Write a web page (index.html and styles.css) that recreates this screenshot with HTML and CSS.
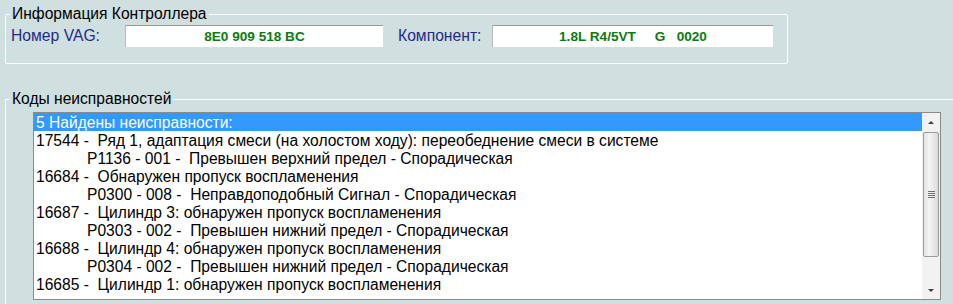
FILE: index.html
```html
<!DOCTYPE html>
<html lang="ru">
  <head>
    <meta charset="utf-8" />
    <title>Информация Контроллера</title>
    <link rel="stylesheet" href="styles.css">
  </head>
  <body>
    <fieldset class="group group-info">
      <legend>Информация Контроллера</legend>
      <div class="info-row">
        <span class="label label-vag">Номер VAG:</span>
        <div class="field field-vag">8E0 909 518 BC</div>
        <span class="label label-comp">Компонент:</span>
        <div class="field field-comp">1.8L R4/5VT&nbsp;&nbsp;&nbsp;&nbsp;&nbsp;G&nbsp;&nbsp;&nbsp;0020</div>
      </div>
    </fieldset>

    <fieldset class="group group-codes">
      <legend>Коды неисправностей</legend>
      <div class="listbox">
        <ul class="list">
          <li class="selected">5 Найдены неисправности:</li>
          <li>17544 -&nbsp; Ряд 1, адаптация смеси (на холостом ходу): переобеднение смеси в системе</li>
          <li class="sub">P1136 - 001 -&nbsp; Превышен верхний предел - Спорадическая</li>
          <li>16684 -&nbsp; Обнаружен пропуск воспламенения</li>
          <li class="sub">P0300 - 008 -&nbsp; Неправдоподобный Сигнал - Спорадическая</li>
          <li>16687 -&nbsp; Цилиндр 3: обнаружен пропуск воспламенения</li>
          <li class="sub">P0303 - 002 -&nbsp; Превышен нижний предел - Спорадическая</li>
          <li>16688 -&nbsp; Цилиндр 4: обнаружен пропуск воспламенения</li>
          <li class="sub">P0304 - 002 -&nbsp; Превышен нижний предел - Спорадическая</li>
          <li>16685 -&nbsp; Цилиндр 1: обнаружен пропуск воспламенения</li>
        </ul>
        <div class="scrollbar">
          <div class="arrow arrow-up"></div>
          <div class="track">
            <div class="thumb"><span class="grip"></span></div>
          </div>
          <div class="arrow arrow-down"></div>
        </div>
      </div>
    </fieldset>
  </body>
</html>
```

FILE: styles.css
```css
* {
  box-sizing: border-box;
}

html, body {
  height: 100%;
}

body {
  margin: 0;
  padding: 6px 0 0 5px;
  background: #D0DFE0;
  font-family: "Liberation Sans", Arial, sans-serif;
  font-size: 15.6px;
  color: #000000;
  overflow: hidden;
  display: flex;
  flex-direction: column;
}

.group {
  margin: 0;
  border: 1px solid #ffffff;
  border-radius: 2px;
}

.group legend {
  padding: 0 2px;
  margin-left: -1px;
  font-size: 15.6px;
  line-height: 16px;
}

.group-info {
  flex: none;
  width: 783px;
  height: 58px;
  padding: 3px 0 0 5px;
}

.info-row {
  display: flex;
  align-items: center;
}

.label {
  color: #1E2A8C;
  font-size: 15.7px;
}

.label-vag {
  width: 114px;
}

.label-comp {
  margin-left: 15px;
  width: 94px;
}

.field {
  height: 22px;
  background: #ffffff;
  border-top: 1px solid #9a9a9a;
  border-left: 1px solid #b8b8b8;
  color: #0D7A12;
  font-weight: bold;
  font-size: 13.6px;
  line-height: 21px;
  text-align: center;
}

.field-vag {
  width: 258px;
}

.field-comp {
  width: 281px;
}

/* the second frame runs off the right and bottom edges */
.group-codes {
  flex: 1;
  min-height: 0;
  margin-top: 27px;
  padding: 5px 0 0 5px;
  border-right: none;
  border-bottom: none;
  border-radius: 2px 0 0 0;
}

.listbox {
  display: flex;
  margin-left: 22px;
  width: 908px;
  height: 188px;
  border: 1px solid #8a8a8a;
  background: #ffffff;
}

.list {
  flex: 1;
  list-style: none;
  margin: 0;
  padding: 0;
  font-size: 15.6px;
  line-height: 18px;
  overflow: hidden;
}

.list li {
  height: 18px;
  padding: 1px 0 0 2px;
  line-height: 18px;
  white-space: nowrap;
}

.list li.sub {
  padding-left: 53px;
}

.list li.selected {
  background: #3399FF;
  color: #ffffff;
}

.scrollbar {
  width: 18px;
  display: flex;
  flex-direction: column;
  background: #F2F2F2;
  padding: 0 1px;
}

.arrow {
  height: 19px;
  position: relative;
}

.arrow::after {
  content: "";
  position: absolute;
  left: 5px;
  border-left: 3px solid transparent;
  border-right: 3px solid transparent;
}

.arrow-up::after {
  top: 8px;
  border-bottom: 3px solid #404040;
}

.arrow-down::after {
  top: 9px;
  border-top: 3px solid #404040;
}

.track {
  flex: 1;
  padding-bottom: 23px;
}

.thumb {
  height: 100%;
  border: 1px solid #9a9a9a;
  border-radius: 2px;
  background: linear-gradient(90deg, #E4E4E4 0%, #F4F4F4 40%, #DADADA 100%);
  display: flex;
  align-items: center;
  justify-content: center;
}

.grip {
  width: 7px;
  height: 7px;
  background: repeating-linear-gradient(180deg, #707070 0, #707070 1px, transparent 1px, transparent 2px);
}
```
